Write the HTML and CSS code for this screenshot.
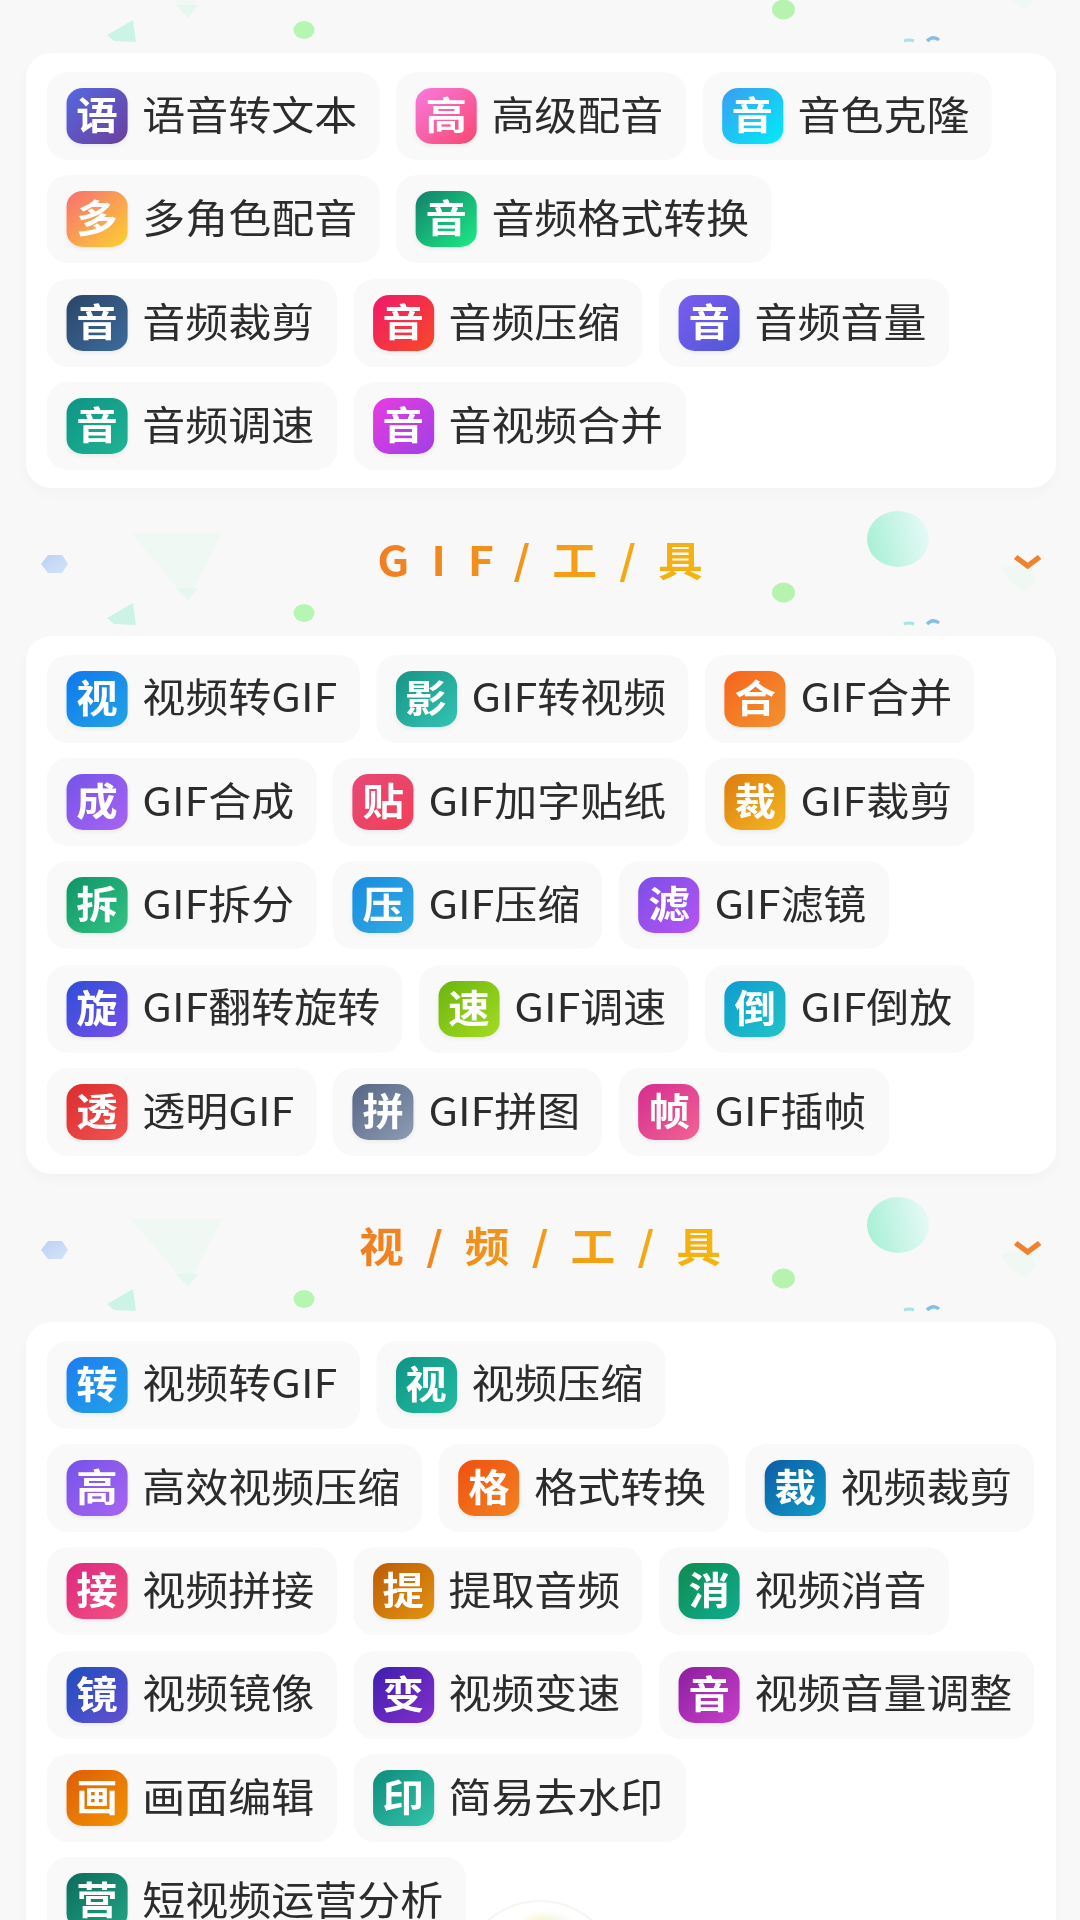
FILE: index.html
```html
<!DOCTYPE html>
<html lang="zh-CN">
<head>
<meta charset="utf-8">
<title>工具</title>
<link rel="stylesheet" href="styles.css">
</head>
<body>
<svg class="defs" width="0" height="0" aria-hidden="true">
  <defs>
    <linearGradient id="ball" x1="0" y1="0.6" x2="1" y2="0.4">
      <stop offset="0" stop-color="#a9f0d6"/><stop offset="1" stop-color="#e6f9f6"/>
    </linearGradient>
    <linearGradient id="hex" x1="0" y1="0" x2="1" y2="1">
      <stop offset="0" stop-color="#bcd0f6"/><stop offset="1" stop-color="#d4e4f6"/>
    </linearGradient>
    <g id="deco">
      <polygon points="131,45 222,45 188,112" fill="#eff8f2"/>
      <polygon points="176,100 198,100 188,113" fill="#e6f7ef"/>
      <polygon points="41,76 48,67 62,67 68,76 62,85 48,85" fill="url(#hex)"/>
      <polygon points="107,130 133,115 136,137 114,136" fill="#cbf4e6"/>
      <ellipse cx="304" cy="125" rx="10.5" ry="9" fill="#b6f5b2"/>
      <ellipse cx="783.5" cy="104.5" rx="11.5" ry="10" fill="#b8f2b0"/>
      <ellipse cx="898" cy="51" rx="31" ry="28" fill="url(#ball)"/>
      <polygon points="1001,80 1030,74 1036,92 1025,104 1010,94" fill="#eff8f2"/>
      <path d="M904 136q5-2 10 0" stroke="#a6e4e2" stroke-width="3" fill="none"/>
      <path d="M927 136q6-6 12-1" stroke="#84bdea" stroke-width="3.5" fill="none"/>
    </g>
  </defs>
</svg>
<div class="page">
  <div class="head head-first">
    <svg class="deco" viewBox="0 0 1080 148" preserveAspectRatio="none"><use href="#deco"/></svg>
  </div>
  <section class="card">
    <a class="chip"><i class="ico g-yu">语</i><span>语音转文本</span></a>
    <a class="chip"><i class="ico g-gao">高</i><span>高级配音</span></a>
    <a class="chip"><i class="ico g-clone">音</i><span>音色克隆</span></a>
    <a class="chip"><i class="ico g-duo">多</i><span>多角色配音</span></a>
    <a class="chip"><i class="ico g-fmt">音</i><span>音频格式转换</span></a>
    <a class="chip"><i class="ico g-cut">音</i><span>音频裁剪</span></a>
    <a class="chip"><i class="ico g-zip">音</i><span>音频压缩</span></a>
    <a class="chip"><i class="ico g-vol">音</i><span>音频音量</span></a>
    <a class="chip"><i class="ico g-spd">音</i><span>音频调速</span></a>
    <a class="chip"><i class="ico g-mrg">音</i><span>音视频合并</span></a>
  </section>

  <div class="head">
    <svg class="deco" viewBox="0 0 1080 148" preserveAspectRatio="none"><use href="#deco"/></svg>
    <h2 class="title">GIF/工/具</h2>
    <svg class="chev" viewBox="0 0 26 16"><path d="M2 3l11 9 11-9" fill="none" stroke="#ef8230" stroke-width="5"/></svg>
  </div>
  <section class="card">
    <a class="chip"><i class="ico g-shi">视</i><span>视频转GIF</span></a>
    <a class="chip"><i class="ico g-ying">影</i><span>GIF转视频</span></a>
    <a class="chip"><i class="ico g-he">合</i><span>GIF合并</span></a>
    <a class="chip"><i class="ico g-cheng">成</i><span>GIF合成</span></a>
    <a class="chip"><i class="ico g-tie">贴</i><span>GIF加字贴纸</span></a>
    <a class="chip"><i class="ico g-cai">裁</i><span>GIF裁剪</span></a>
    <a class="chip"><i class="ico g-chai">拆</i><span>GIF拆分</span></a>
    <a class="chip"><i class="ico g-ya">压</i><span>GIF压缩</span></a>
    <a class="chip"><i class="ico g-lv">滤</i><span>GIF滤镜</span></a>
    <a class="chip"><i class="ico g-xuan">旋</i><span>GIF翻转旋转</span></a>
    <a class="chip"><i class="ico g-su">速</i><span>GIF调速</span></a>
    <a class="chip"><i class="ico g-dao">倒</i><span>GIF倒放</span></a>
    <a class="chip"><i class="ico g-tou">透</i><span>透明GIF</span></a>
    <a class="chip"><i class="ico g-pin">拼</i><span>GIF拼图</span></a>
    <a class="chip"><i class="ico g-zhen">帧</i><span>GIF插帧</span></a>
  </section>

  <div class="head">
    <svg class="deco" viewBox="0 0 1080 148" preserveAspectRatio="none"><use href="#deco"/></svg>
    <h2 class="title">视/频/工/具</h2>
    <svg class="chev" viewBox="0 0 26 16"><path d="M2 3l11 9 11-9" fill="none" stroke="#ef8230" stroke-width="5"/></svg>
  </div>
  <section class="card">
    <a class="chip"><i class="ico g-zhuan">转</i><span>视频转GIF</span></a>
    <a class="chip"><i class="ico g-vzip">视</i><span>视频压缩</span></a>
    <a class="chip"><i class="ico g-cheng">高</i><span>高效视频压缩</span></a>
    <a class="chip"><i class="ico g-ge">格</i><span>格式转换</span></a>
    <a class="chip"><i class="ico g-vcut">裁</i><span>视频裁剪</span></a>
    <a class="chip"><i class="ico g-jie">接</i><span>视频拼接</span></a>
    <a class="chip"><i class="ico g-ti">提</i><span>提取音频</span></a>
    <a class="chip"><i class="ico g-xiao">消</i><span>视频消音</span></a>
    <a class="chip"><i class="ico g-jing">镜</i><span>视频镜像</span></a>
    <a class="chip"><i class="ico g-bian">变</i><span>视频变速</span></a>
    <a class="chip"><i class="ico g-yin">音</i><span>视频音量调整</span></a>
    <a class="chip"><i class="ico g-hua">画</i><span>画面编辑</span></a>
    <a class="chip"><i class="ico g-wm">印</i><span>简易去水印</span></a>
    <a class="chip"><i class="ico g-ying2">营</i><span>短视频运营分析</span></a>
  </section>
</div>
<div class="fab"><span class="fab-spot"></span></div>
</body>
</html>
```
FILE: styles.css
```css
html, body {
  margin: 0;
  height: 1920px;
  overflow: hidden;
  background: #f8f8f8;
}
.defs { position: absolute; }
.page {
  width: 990px;
  transform: scaleX(1.0909);
  transform-origin: 0 0;
  font-family: "Noto Sans CJK SC", "Noto Sans", sans-serif;
  filter: blur(0.6px);
}
.head {
  position: relative;
  height: 148px;
  display: flex;
  align-items: center;
  justify-content: center;
}
.head-first { margin-top: -95px; }
.deco {
  position: absolute;
  left: 0;
  top: 0;
  width: 990px;
  height: 148px;
}
.title {
  position: relative;
  margin: -7px -20px 0 0;
  font-size: 41px;
  line-height: 48px;
  font-weight: 700;
  letter-spacing: 20px;
  background: linear-gradient(90deg, #f07e22, #f5b80e);
  -webkit-background-clip: text;
  background-clip: text;
  color: transparent;
}
.chev {
  position: absolute;
  left: 929px;
  top: 66px;
  width: 26px;
  height: 16px;
}
.card {
  margin: 0 22px 0 24px;
  padding: 19px 15px 17.4px 19px;
  display: flex;
  flex-wrap: wrap;
  align-content: flex-start;
  gap: 15.4px 15px;
  background: #fff;
  border-radius: 24px;
  box-shadow: 0 6px 12px rgba(0, 0, 0, 0.025);
}
.chip {
  height: 88px;
  box-sizing: border-box;
  padding: 0 20.5px 0 18px;
  display: flex;
  align-items: center;
  gap: 13.5px;
  background: #f9f9f9;
  border-radius: 20px;
  font-size: 39.4px;
  color: #2c2c2c;
  white-space: nowrap;
}
.chip span { padding-bottom: 7.5px; }
.ico {
  width: 56px;
  height: 56px;
  box-sizing: border-box;
  padding-bottom: 6px;
  flex: none;
  display: flex;
  align-items: center;
  justify-content: center;
  border-radius: 15px;
  color: #fff;
  font-style: normal;
  font-weight: 700;
  font-size: 38px;
  line-height: 1;
  box-shadow: 0 2px 4px rgba(0, 0, 0, 0.06);
}
.fab {
  position: absolute;
  left: 462px;
  top: 1902px;
  width: 156px;
  height: 156px;
  border-radius: 50%;
  background: #fff;
  box-shadow: 0 0 0 2px #f5f5f3;
}
.fab-spot {
  position: absolute;
  left: 58px;
  top: 13px;
  width: 54px;
  height: 30px;
  border-radius: 50%;
  background: linear-gradient(90deg, #fdf4c0, #eef8f6);
  filter: blur(3px);
}

.g-yu { background: linear-gradient(135deg, #5568e0, #6c3f9e); }
.g-gao { background: linear-gradient(135deg, #f87ade, #f8476f); }
.g-clone { background: linear-gradient(135deg, #3a9df0, #00ecfa); }
.g-duo { background: linear-gradient(135deg, #f86e74, #fcd22e); }
.g-fmt { background: linear-gradient(135deg, #127f6c, #1cec84); }
.g-cut { background: linear-gradient(135deg, #2b4568, #3c6c9c); }
.g-zip { background: linear-gradient(135deg, #f0186c, #f84a24); }
.g-vol { background: linear-gradient(135deg, #7a5cf0, #5058d8); }
.g-spd { background: linear-gradient(135deg, #0c9484, #20b494); }
.g-mrg { background: linear-gradient(135deg, #e83ce0, #a040e4); }
.g-shi { background: linear-gradient(135deg, #0e78ee, #22a4e4); }
.g-ying { background: linear-gradient(135deg, #169484, #34c4b4); }
.g-he { background: linear-gradient(135deg, #f8641c, #f09430); }
.g-cheng { background: linear-gradient(135deg, #7454e8, #a864f2); }
.g-tie { background: linear-gradient(135deg, #e64876, #f24058); }
.g-cai { background: linear-gradient(135deg, #de7c0e, #f2b822); }
.g-chai { background: linear-gradient(135deg, #0e9468, #34c484); }
.g-ya { background: linear-gradient(135deg, #168ce0, #34ace2); }
.g-lv { background: linear-gradient(135deg, #7c4ee8, #b654f2); }
.g-xuan { background: linear-gradient(135deg, #2e4ed8, #7850ea); }
.g-su { background: linear-gradient(135deg, #6cb40e, #a4dc22); }
.g-dao { background: linear-gradient(135deg, #0e9cd0, #22c4c8); }
.g-tou { background: linear-gradient(135deg, #dc2c2c, #f25454); }
.g-pin { background: linear-gradient(135deg, #566684, #8e9cb4); }
.g-zhen { background: linear-gradient(135deg, #d62c8e, #f26494); }
.g-zhuan { background: linear-gradient(135deg, #1e7cf0, #22a4e8); }
.g-vzip { background: linear-gradient(135deg, #0e9484, #22bca2); }
.g-ge { background: linear-gradient(135deg, #f04e0e, #f28422); }
.g-vcut { background: linear-gradient(135deg, #0e5ca6, #109cc8); }
.g-jie { background: linear-gradient(135deg, #de2680, #f25482); }
.g-ti { background: linear-gradient(135deg, #bc5c08, #e29410); }
.g-xiao { background: linear-gradient(135deg, #0e8c4e, #10ac92); }
.g-jing { background: linear-gradient(135deg, #1e4ebe, #6450d2); }
.g-bian { background: linear-gradient(135deg, #3e1eae, #8430ca); }
.g-yin { background: linear-gradient(135deg, #8c1e9e, #c840ca); }
.g-hua { background: linear-gradient(135deg, #de5c08, #f29400); }
.g-wm { background: linear-gradient(135deg, #0e8c7c, #34c4aa); }
.g-ying2 { background: linear-gradient(135deg, #0c6c5c, #22a484); }
```
